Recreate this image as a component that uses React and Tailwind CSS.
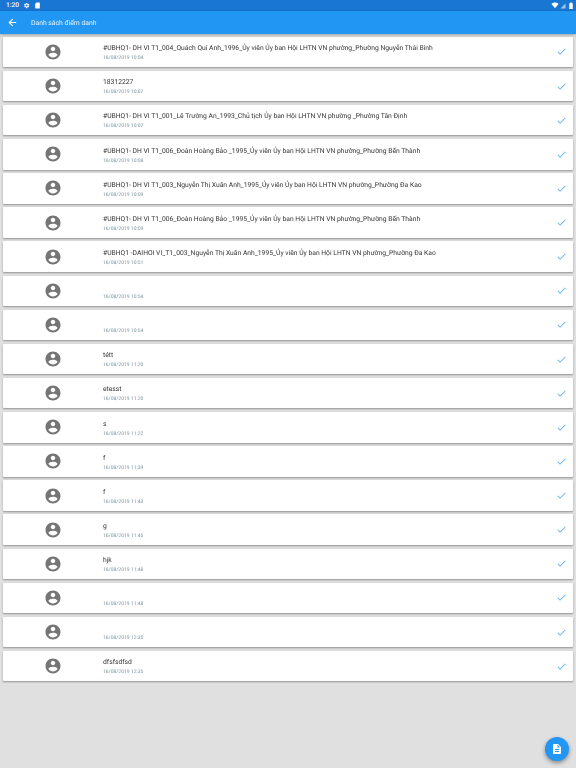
import React from 'react';
import { ArrowLeft } from 'lucide-react';

const rows = [
  { name: '#UBHQ1- DH VI T1_004_Quách Quí Anh_1996_Ủy viên Ủy ban Hội LHTN VN phường_Phường Nguyễn Thái Bình', time: '16/08/2019 10:04' },
  { name: '18312227', time: '16/08/2019 10:07' },
  { name: '#UBHQ1- DH VI T1_001_Lê Trường An_1993_Chủ tịch Ủy ban Hội LHTN VN phường _Phường Tân Định', time: '16/08/2019 10:07' },
  { name: '#UBHQ1- DH VI T1_006_Đoàn Hoàng Bảo _1995_Ủy viên Ủy ban Hội LHTN VN phường_Phường Bến Thành', time: '16/08/2019 10:08' },
  { name: '#UBHQ1- DH VI T1_003_Nguyễn Thị Xuân Anh_1995_Ủy viên Ủy ban Hội LHTN VN phường_Phường Đa Kao', time: '16/08/2019 10:09' },
  { name: '#UBHQ1- DH VI T1_006_Đoàn Hoàng Bảo _1995_Ủy viên Ủy ban Hội LHTN VN phường_Phường Bến Thành', time: '16/08/2019 10:09' },
  { name: '#UBHQ1 -DAIHOI VI_T1_003_Nguyễn Thị Xuân Anh_1995_Ủy viên Ủy ban Hội LHTN VN phường_Phường Đa Kao', time: '16/08/2019 10:51' },
  { name: '', time: '16/08/2019 10:54' },
  { name: '', time: '16/08/2019 10:54' },
  { name: 'tétt', time: '16/08/2019 11:20' },
  { name: 'etesst', time: '16/08/2019 11:20' },
  { name: 's', time: '16/08/2019 11:22' },
  { name: 'f', time: '16/08/2019 11:39' },
  { name: 'f', time: '16/08/2019 11:43' },
  { name: 'g', time: '16/08/2019 11:45' },
  { name: 'hjk', time: '16/08/2019 11:48' },
  { name: '', time: '16/08/2019 11:48' },
  { name: '', time: '16/08/2019 12:35' },
  { name: 'dfsfsdfsd', time: '16/08/2019 12:35' },
];

const AccountIcon = () => (
  <svg viewBox="0 0 24 24" className="w-[18px] h-[18px] fill-[#757575]">
    <path d="M12 2C6.48 2 2 6.48 2 12s4.48 10 10 10 10-4.48 10-10S17.52 2 12 2zm0 3c1.66 0 3 1.34 3 3s-1.34 3-3 3-3-1.34-3-3 1.34-3 3-3zm0 14.2c-2.5 0-4.71-1.28-6-3.22.03-1.99 4-3.08 6-3.08 1.99 0 5.97 1.09 6 3.08-1.29 1.94-3.5 3.22-6 3.22z" />
  </svg>
);

const CheckIcon = () => (
  <svg viewBox="0 0 24 24" className="w-[11px] h-[11px] fill-[#64b5f6]">
    <path d="M9 16.17 4.83 12l-1.42 1.41L9 19 21 7l-1.41-1.41z" />
  </svg>
);

const Row = ({ name, time }) => (
  <div className="flex items-center h-[30.5px] bg-white rounded-[1px] shadow-[0_1px_2px_rgba(0,0,0,0.35)]">
    <div className="w-[100px] flex justify-center">
      <AccountIcon />
    </div>
    <div className="flex-1 min-w-0 pt-[1px] [will-change:transform]">
      <div className="h-[11px] text-[6.75px] leading-[11px] text-[#333] whitespace-nowrap">{name}</div>
      <div className="text-[5px] leading-[7px] mt-[0.5px] text-[#78909c] whitespace-nowrap">{time}</div>
    </div>
    <div className="w-[17px] flex justify-start">
      <CheckIcon />
    </div>
  </div>
);

export default function App() {
  return (
    <div className="relative w-[576px] h-[768px] bg-[#e0e0e0] overflow-hidden font-['Roboto',sans-serif] [text-rendering:geometricPrecision]">
      <div className="h-[11px] bg-[#1976d2] flex items-center justify-between pl-[6px] pr-[3px] text-white">
        <div className="flex items-center gap-[4px]">
          <span className="text-[6.6px] leading-none font-medium">1:20</span>
          <svg viewBox="0 0 24 24" className="w-[7px] h-[7px] fill-white">
            <path d="M19.4 13a7.5 7.5 0 0 0 0-2l2.1-1.6-2-3.5-2.5 1a7.4 7.4 0 0 0-1.7-1L14.5 3h-4l-.4 2.900a7.4 7.4 0 0 0-1.7 1l-2.500-1-2 3.500L6 11a7.500 7.500 0 0 0 0 2l-2.100 1.600 2 3.500 2.500-1a7.400 7.400 0 0 0 1.700 1l.4 2.900h4l.4-2.900a7.400 7.400 0 0 0 1.700-1l2.500 1 2-3.500zM12.500 15.500a3.500 3.500 0 1 1 0-7 3.500 3.500 0 0 1 0 7z" />
          </svg>
          <svg viewBox="0 0 24 24" className="w-[7px] h-[7px] fill-white">
            <path d="M8 2h10a2 2 0 0 1 2 2v16a2 2 0 0 1-2 2H6a2 2 0 0 1-2-2V7z" />
          </svg>
        </div>
        <div className="flex items-center gap-[1px]">
          <svg viewBox="0 0 24 24" className="w-[8px] h-[7px] fill-white">
            <path d="M12 21 0 7c3-3 7.500-5 12-5s9 2 12 5z" />
          </svg>
          <svg viewBox="0 0 24 24" className="w-[6px] h-[6px] fill-white/60">
            <path d="M22 22V2L2 22z" />
          </svg>
          <svg viewBox="0 0 12 24" className="w-[4px] h-[7px] ml-[2px] fill-white">
            <path d="M3 2h6v2h3v20H0V4h3z" />
          </svg>
        </div>
      </div>

      <div className="h-[23px] bg-[#2196f3] flex items-center shadow-[0_1px_3px_rgba(0,0,0,0.3)] relative">
        <ArrowLeft className="ml-[7px] w-[11px] h-[11px] text-white" strokeWidth={2.5} />
        <span className="ml-[13px] mt-[1px] text-[6.8px] text-white/90 [will-change:transform]">Danh sách điểm danh</span>
      </div>

      <div className="flex flex-col gap-[3.63px] pt-[2.7px] px-[3px]">
        {rows.map((r, i) => (
          <Row key={i} name={r.name} time={r.time} />
        ))}
      </div>

      <button className="absolute right-[7px] bottom-[7px] w-[24px] h-[24px] rounded-full bg-[#2196f3] flex items-center justify-center shadow-[0_2px_4px_rgba(0,0,0,0.4)]">
        <svg viewBox="0 0 24 24" className="w-[12px] h-[12px] fill-white">
          <path d="M14 2H6c-1.100 0-2 .9-2 2v16c0 1.100.9 2 2 2h12c1.100 0 2-.9 2-2V8zm2 16H8v-2h8zm0-4H8v-2h8zm-3-5V3.500L18.500 9z" />
        </svg>
      </button>
    </div>
  );
}
